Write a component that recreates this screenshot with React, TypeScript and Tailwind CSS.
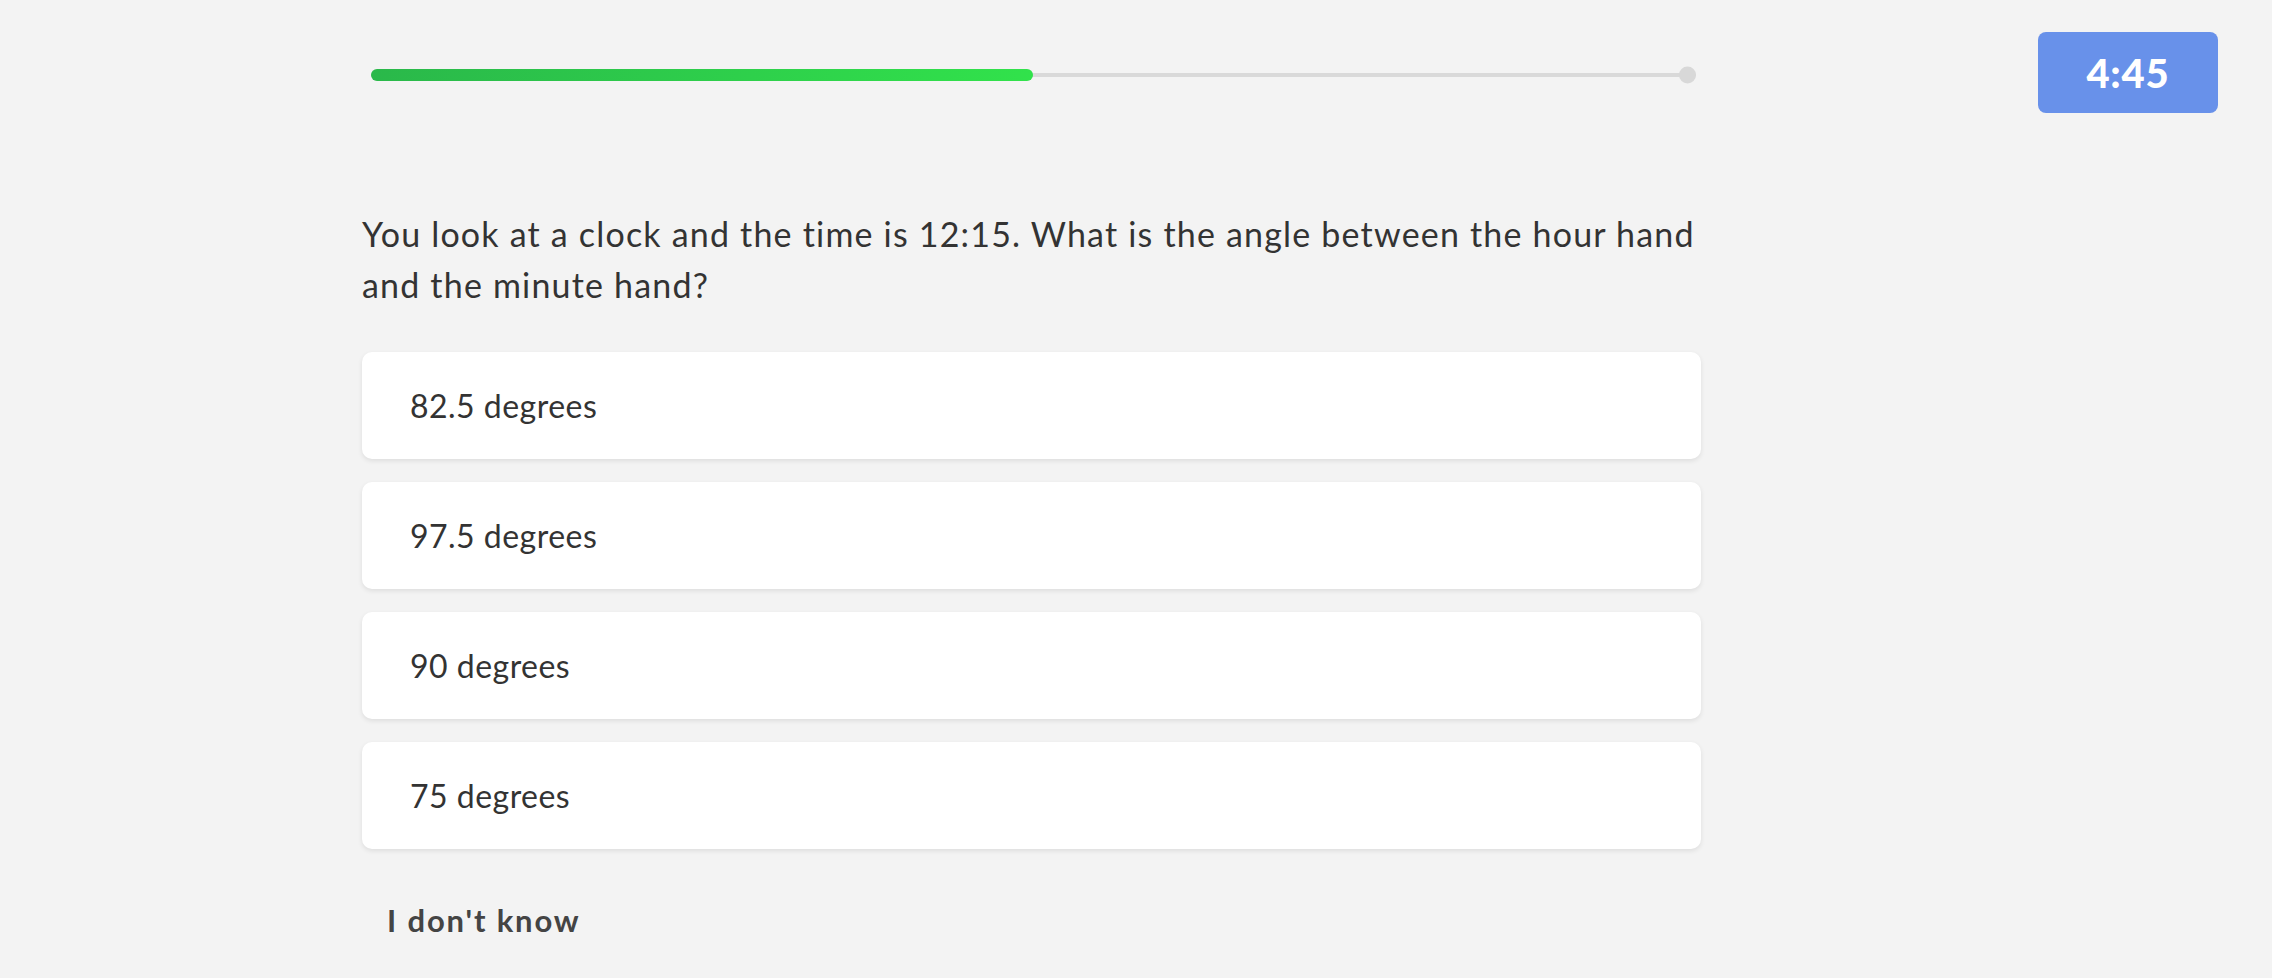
import React from "react";

type Option = { id: number; label: string };

const OPTIONS: Option[] = [
    { id: 1, label: "82.5 degrees" },
    { id: 2, label: "97.5 degrees" },
    { id: 3, label: "90 degrees" },
    { id: 4, label: "75 degrees" },
];

function ProgressBar() {
    return (
        <div className="pl-[9px] pr-[5px] pt-[69px] h-[81px]">
            <div className="relative h-[4px] bg-[#d9d9d9] rounded-full mt-[4px]">
                <div className="absolute left-0 top-1/2 -translate-y-1/2 h-[12px] w-[662px] rounded-full bg-gradient-to-r from-[#2ab84a] to-[#31e24b]" />
                <div className="absolute right-0 top-1/2 -translate-y-1/2 w-[17px] h-[17px] rounded-full bg-[#d8d8d8]" />
            </div>
        </div>
    );
}

function Timer() {
    return (
        <div className="w-[180px] h-[81px] rounded-[8px] bg-[#6891ea] flex items-center justify-center">
            <span className="text-white font-black text-[40px] leading-none tracking-[0.02em]">4:45</span>
        </div>
    );
}

export default function App() {
    return (
        <div className="min-h-screen bg-[#f3f3f3] flex" style={{ fontFamily: "Lato, 'Open Sans', sans-serif" }}>
            <div className="ml-[362px] w-[1339px] flex flex-col">
                <ProgressBar />
                <p className="mt-[127px] text-[34px] leading-[51px] tracking-[0.035em] text-[#333333]">
                    You look at a clock and the time is 12:15. What is the angle between the hour hand and the minute hand?
                </p>
                <div className="mt-[42px] flex flex-col gap-[23px]">
                    {OPTIONS.map((o) => (
                        <button
                            key={o.id}
                            className="h-[107px] w-full bg-white rounded-[10px] shadow-[0_2px_5px_rgba(0,0,0,0.09)] flex items-center pl-[48px] text-left text-[32px] tracking-[0.015em] text-[#333333]"
                        >
                            {o.label}
                        </button>
                    ))}
                </div>
                <div className="mt-[53px] pl-[25px]">
                    <span className="text-[31px] font-bold text-[#444444] leading-[36px] tracking-[0.06em]">I don't know</span>
                </div>
            </div>
            <div className="flex-1 flex justify-end pr-[54px] pt-[32px]">
                <Timer />
            </div>
        </div>
    );
}
